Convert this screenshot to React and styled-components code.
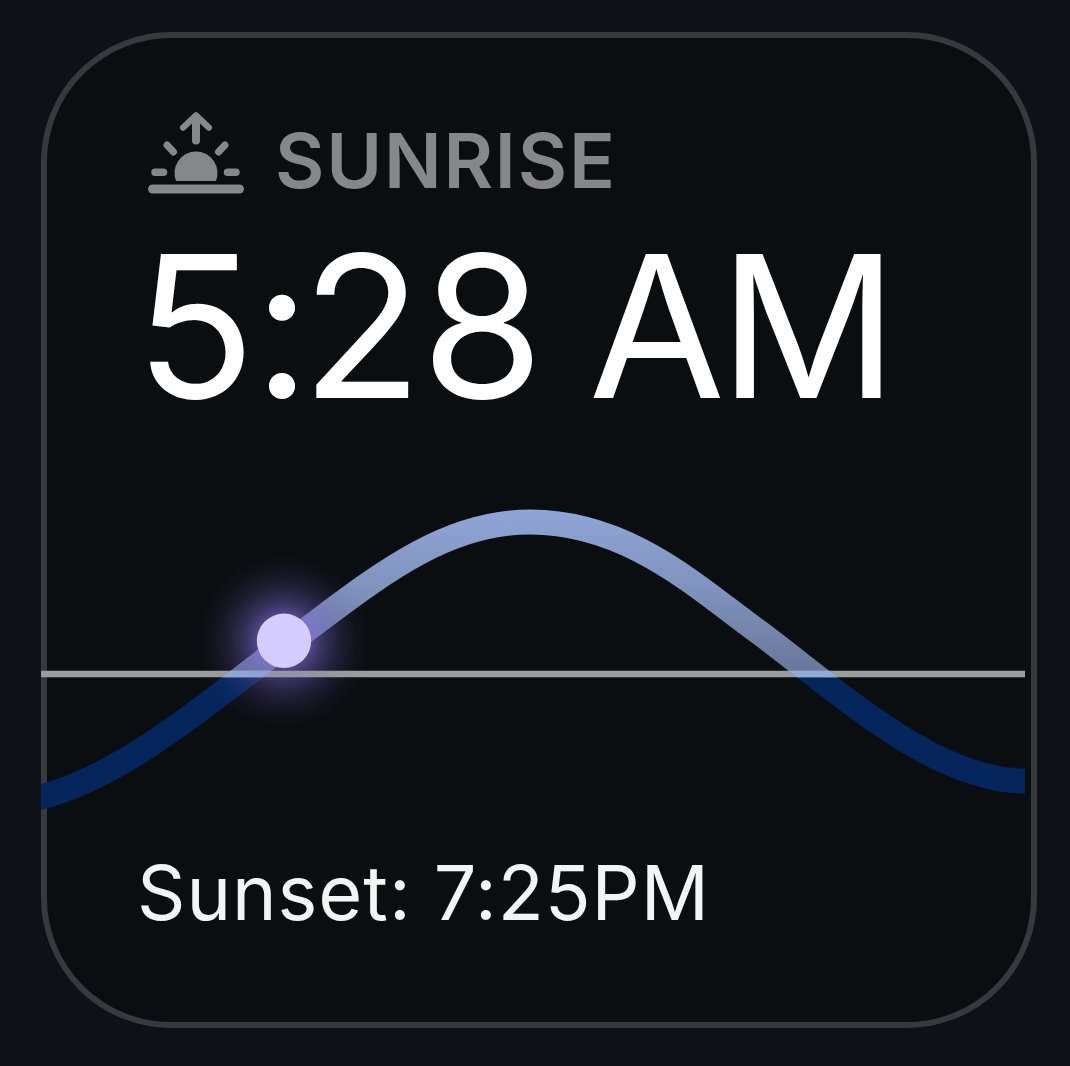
import React from "react";
import styled, { createGlobalStyle } from "styled-components";

const GlobalStyle = createGlobalStyle`
  body {
    margin: 0;
    background: #0e1117;
    font-family: Inter, "Liberation Sans", sans-serif;
  }
`;

const Page = styled.main`
  box-sizing: border-box;
  width: 1070px;
  height: 1066px;
  padding: 32px 33px 38px 41px;
  overflow: hidden;
`;

const Card = styled.section`
  box-sizing: border-box;
  display: flex;
  flex-direction: column;
  width: 996px;
  height: 996px;
  padding-top: 72px;
  border: 6px solid #36393d;
  border-radius: 130px;
  background: #0a0e11;
`;

const Header = styled.header`
  display: flex;
  align-items: center;
  height: 100px;
  padding-left: 97px;
  color: #868789;
`;

const SunriseIcon = styled.svg`
  flex: none;
  width: 104px;
  height: 100px;
`;

const Line = styled.div`
  white-space: pre;
  font-size: ${(p) => p.$size}px;
  font-weight: ${(p) => p.$weight};
  letter-spacing: ${(p) => p.$spacing}px;
  line-height: ${(p) => p.$height}px;
  margin: ${(p) => p.$margin || 0};
  color: ${(p) => p.$color || "inherit"};
`;

const Kern = styled.span`
  letter-spacing: ${(p) => p.$by}px;
`;

const Chart = styled.svg`
  display: block;
  flex: none;
  width: 984px;
  height: 360px;
  margin: 54px 0 0 -6px;
`;

const CURVE =
  "M36 798.3 L41 797 C115 778 190 718 265 660 C355 597 430 522 530 522 C630 522 700 590 760 633 C840 693 935 781 1025 781 H1030";

export default function App() {
  return (
    <>
      <GlobalStyle />
      <Page>
        <Card>
          <Header>
            <SunriseIcon viewBox="144 110 104 100" fill="none" stroke="currentColor" strokeLinecap="round" strokeLinejoin="round">
              <path d="M196 117V140.5" strokeWidth="8" />
              <path d="M183.2 127.5L196 115.5L208.8 127.5" strokeWidth="6.5" />
              <path d="M167 145L173.5 152M225 145L218.5 152" strokeWidth="7" />
              <path d="M155 172.3H163.5M227.5 172.3H236" strokeWidth="7.5" />
              <path d="M176 181A21.5 21.5 0 1 1 216 181Z" fill="currentColor" stroke="none" />
              <path d="M152.5 189H239.5" strokeWidth="9" />
            </SunriseIcon>
            <Line $size={76} $weight={600} $spacing={1.8} $height={100} $margin="0 0 0 27px">SUNRISE</Line>
          </Header>
          <Line $size={198} $weight={400} $spacing={-3} $height={200} $margin="16px 0 0 88px" $color="#fff">
            <Kern $by={-2}>5</Kern><Kern $by={-9}>:</Kern><Kern $by={-1}>2</Kern><Kern $by={-6}>8</Kern><Kern $by={-5}> </Kern><Kern $by={-6}>A</Kern>M
          </Line>
          <Chart viewBox="41 480 984 360">
            <defs>
              <linearGradient id="day" gradientUnits="userSpaceOnUse" x1="0" y1="510" x2="0" y2="674">
                <stop offset="0" stopColor="#8fa5d6" />
                <stop offset="0.45" stopColor="#8094c0" />
                <stop offset="1" stopColor="#6a7699" />
              </linearGradient>
              <radialGradient id="glow" gradientUnits="userSpaceOnUse" cx="284" cy="641" r="88">
                <stop offset="0" stopColor="#8375e0" stopOpacity="0.72" />
                <stop offset="0.3" stopColor="#8070da" stopOpacity="0.6" />
                <stop offset="0.45" stopColor="#7866cc" stopOpacity="0.4" />
                <stop offset="0.65" stopColor="#6e5ab4" stopOpacity="0.2" />
                <stop offset="0.85" stopColor="#6250a0" stopOpacity="0.06" />
                <stop offset="1" stopColor="#6250a0" stopOpacity="0" />
              </radialGradient>
              <clipPath id="above"><rect x="41" y="480" width="984" height="194" /></clipPath>
              <clipPath id="below"><rect x="41" y="674" width="984" height="166" /></clipPath>
              <clipPath id="horizon"><rect x="41" y="670.7" width="984" height="6.6" /></clipPath>
            </defs>
            <g fill="none" strokeWidth="25">
              <path d={CURVE} stroke="url(#day)" clipPath="url(#above)" />
              <path d={CURVE} stroke="#05265d" clipPath="url(#below)" />
            </g>
            <circle cx="284" cy="641" r="88" fill="url(#glow)" />
            <path d="M41 674H1025" stroke="#9b9c9f" strokeWidth="6.6" />
            <path d={CURVE} fill="none" stroke="#92abd6" strokeWidth="25" clipPath="url(#horizon)" />
            <circle cx="284" cy="641" r="88" fill="url(#glow)" opacity="0.35" clipPath="url(#horizon)" />
            <circle cx="284" cy="640.8" r="27.2" fill="#d5ccff" />
          </Chart>
          <Line $size={75.5} $weight={400} $spacing={0.95} $height={100} $margin="3px 0 0 90px" $color="#f3f4f4">Sunset: 7:25PM</Line>
        </Card>
      </Page>
    </>
  );
}
